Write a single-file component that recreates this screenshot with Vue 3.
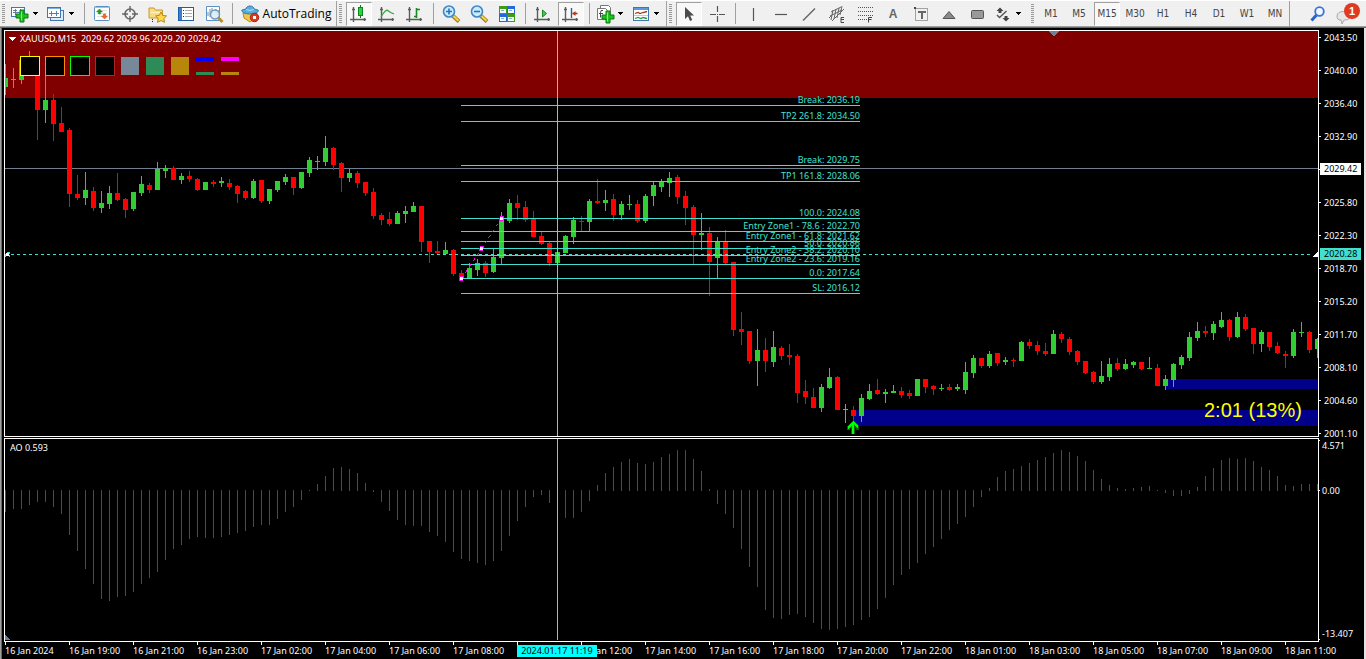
<script setup>
const arrow = '<path d="M0 0h5v1h-1v1h-1v1h-1v-1h-1v-1h-1z" fill="#000"/>'

const axes = '<path d="M4.5 3v15M1 15.5h16M3 5.5h3M15.500 14v3" stroke="#5c5c5c" stroke-width="1.4" fill="none"/>'
const plus = '<path d="M10 6h4v4h4v4h-4v4h-4v-4h-4v-4h4z" fill="#1fc01f" stroke="#0a7a12"/><path d="M11.500 7.500v9" stroke="#7cf07c"/>'
const lens = '<path d="M12 12l6 5.500" stroke="#a67c12" stroke-width="4"/><path d="M12.500 12l5 4.800" stroke="#f3d34b" stroke-width="2"/><circle cx="8" cy="7.500" r="5.500" fill="#c9ecfb" stroke="#3f86c6" stroke-width="1.600"/>'

const icons = {
  order: '<rect x="1.500" y="3.500" width="13" height="9" fill="#fff" stroke="#3d77b5"/><path d="M3 8.500h10M5.500 5v6M10.500 5v6M3 6.500h4" stroke="#5a7fa8"/>' + plus,
  profiles: '<rect x="4.500" y="6.500" width="13" height="10" fill="#dcecf9" stroke="#3d77b5"/><rect x="1.500" y="3.500" width="13" height="10" fill="#fff" stroke="#3d77b5"/><path d="M2 4.500h12" stroke="#7db1e2"/><path d="M3 9.500h10M5.500 7v5M10.500 7v5" stroke="#5a7fa8"/>',
  market: '<rect x="2.500" y="2.500" width="15" height="14" rx="1" fill="#fff" stroke="#5a8fc4"/><path d="M3 3.500h14" stroke="#9bc4e8"/><path d="M5 6.500h10M5 9.500h10M5 12.500h10" stroke="#e1e1e1"/><path d="M7.500 5l3 3h-2v2h-2v-2h-2z" fill="#20a020" stroke="#168016" stroke-width=".5"/><path d="M12.500 15l-3-3h2v-2h2v2h2z" fill="#f06a30" stroke="#c8481a" stroke-width=".5"/>',
  data: '<circle cx="10" cy="10" r="5" fill="none" stroke="#666" stroke-width="1.600"/><path d="M10 2v6M10 12v6M2 10h6M12 10h6" stroke="#666" stroke-width="1.400"/>',
  navigator: '<path d="M1 4h5l1.500 2h7v8h-13.500z" fill="#f8dc85" stroke="#c99a2b"/><path d="M2.500 8.500h11" stroke="#fff3c0"/><path d="M4.500 15v4" stroke="#222" stroke-dasharray="1 1"/><path d="M13 8l1.700 3.400 3.800.500-2.700 2.600.700 3.800-3.500-1.800-3.400 1.800.600-3.800-2.700-2.600 3.800-.500z" fill="#ffd94a" stroke="#b88714"/>',
  terminal: '<rect x="2.500" y="3.500" width="15" height="13" fill="#fff" stroke="#1e5da8"/><rect x="3" y="4" width="3" height="12" fill="#3c80cc"/><path d="M9 6.500h7M9 9.500h7M9 12.500h7" stroke="#aaa"/><path d="M7 6.500h1M7 9.500h1M7 12.500h1" stroke="#333"/>',
  tester: '<path d="M2.500 2.500h13v14h-13z" fill="#fff" stroke="#5d91c2"/><path d="M4 12V8M6 13V5M8 10V4M12 9V5M14 11V6" stroke="#6d8ca8"/><path d="M13.500 13l5 5" stroke="#bd8e1b" stroke-width="3"/><circle cx="11" cy="10.500" r="4.500" fill="#d3ecf7" fill-opacity=".85" stroke="#7296b6" stroke-width="1.400"/>',
  robot: '<path d="M2 9h14l-1 5-6 4-6-4z" fill="#f1c64b" stroke="#b98a1d"/><path d="M5 5c0-4 8-4 8 0l4 1c2 1-2 4-8 4S-.500 7 1 6z" fill="#58aee0" stroke="#2b78ad"/><path d="M5 5.500q4 2 8 0" fill="none" stroke="#b4e0f6"/><circle cx="13.500" cy="13.500" r="4.200" fill="#d93a20" stroke="#a82511"/><rect x="12" y="12" width="3" height="3" fill="#fff"/>',
  candles: axes + '<path d="M11.500 1v13" stroke="#0c7c18"/><rect x="9.500" y="3.500" width="4" height="8" fill="#31d043" stroke="#0c8a1c"/>',
  line: axes + '<path d="M4 13Q9 4 11.500 7Q13 8.500 17 10" fill="none" stroke="#3fa34a" stroke-width="1.300"/>',
  bars: axes + '<path d="M11.500 4v10M12 5.500h3M9 12.500h3" stroke="#178a20" stroke-width="1.600"/>',
  zoomIn: lens + '<path d="M8 4.500v6M5 7.500h6" stroke="#2375ba" stroke-width="1.600"/>',
  zoomOut: lens + '<path d="M5 7.500h6" stroke="#2375ba" stroke-width="1.600"/>',
  tile: '<rect x="2" y="2" width="8" height="8" fill="#3e9c1c"/><rect x="10" y="2" width="8" height="8" fill="#2767d8"/><rect x="2" y="10" width="8" height="8" fill="#2767d8"/><rect x="10" y="10" width="8" height="8" fill="#3e9c1c"/><path d="M3 5h6v4H3zM11 5h6v4h-6zM3 13h6v4H3zM11 13h6v4h-6z" fill="#f5faff"/><path d="M4 6.500h3M12 6.500h3M4 14.500h3M12 14.500h3" stroke="#86a9ce"/>',
  scroll: axes + '<path d="M9.500 6l4 3.500-4 3.500z" fill="#3fd04e" stroke="#178a20"/>',
  shift: axes + '<path d="M10.500 4v10" stroke="#24649e" stroke-width="1.400"/><path d="M11.500 9.500h5" stroke="#b33514" stroke-width="1.600"/><path d="M14.500 7v5l-3-2.500z" fill="#b33514"/>',
  indicators: '<path d="M5.500 1.500h8l2 2v10h-10z" fill="#fff" stroke="#777"/><path d="M2.500 4.500h8l2 2v9h-10z" fill="#fff" stroke="#777"/><path d="M8 6.500q-2.500-1-2.500 2v5M4 9.500h4" fill="none" stroke="#444"/><g transform="translate(1 1)">' + plus + '</g>',
  template: '<rect x="2.500" y="3.500" width="15" height="13" fill="#fff" stroke="#3d77b5"/><rect x="3" y="4" width="14" height="2" fill="#5b9ad8"/><path d="M4 9.500l3-1 2 1 3-1 4-1" fill="none" stroke="#9c3a1a" stroke-width="1.300"/><path d="M3 11.500h14" stroke="#b6cde4"/><path d="M4 14.500l3-1 3 1 2-1 4 1" fill="none" stroke="#2b9b3a" stroke-width="1.300"/>',
  cursor: '<path d="M6 3v12l3-2.800 2 4.800 2.200-1-2-4.500h3.800z" fill="#4a4a4a"/>',
  cross: '<path d="M10.500 2v6M10.500 12v6M3 10.500h6M12 10.500h6" stroke="#555" stroke-width="1.200"/><path d="M10 10h1v1h-1z" fill="#555"/>',
  vline: '<path d="M10.500 4v13" stroke="#555" stroke-width="1.200"/>',
  hline: '<path d="M4 10.500h12" stroke="#555" stroke-width="1.200"/>',
  trend: '<path d="M4 16.500L16 4.500" stroke="#666" stroke-width="1.400"/>',
  channel: '<path d="M2 14l4-4M5 17l12-12M4 8l10-5M6 6l-2 10M9 5l-2 10M12 4l-2 10M15 2l-2 9M3 12l12-6" stroke="#666" fill="none"/><path d="M17 13.500h-3v5h3M14 15.500h3" fill="none" stroke="#444"/>',
  fibo: '<path d="M3 3.500h15M3 7.500h15M3 11.500h15M3 15.500h9" stroke="#555" stroke-dasharray="1 1"/><path d="M17 13.500h-3.500v5M13.500 15.500h3" fill="none" stroke="#444"/>',
  label: '<rect x="4.500" y="4.500" width="12" height="12" fill="none" stroke="#555" stroke-dasharray="1 1"/><path d="M3 3h2v2H3z" fill="#444"/><path d="M7 8h8M11 8v7" stroke="#666" stroke-width="2"/>',
  triangle: '<path d="M4 14.500L10 7.500l6 7z" fill="#8a8a8a" stroke="#555"/>',
  rect: '<rect x="4.500" y="6.500" width="12" height="8" rx="1" fill="#999" stroke="#555"/>',
  arrows: '<path d="M7 3.500l3.500 3.500h-2v2h-3v-2h-2zM13 17.500l-3.500-3.500h2v-2h3v2h2z" fill="#444"/><path d="M4 11l2.500 2.500 7-6.500" stroke="#555" stroke-width="1.400" fill="none"/>',
  search: '<path d="M8.500 11l-5 5.500" stroke="#2a62cc" stroke-width="3"/><circle cx="11.500" cy="7.500" r="4.300" fill="#f0f8ff" stroke="#3a72d8" stroke-width="1.800"/>',
}

const standard = [
  { name: 'Market Watch', icon: 'market' },
  { name: 'Data Window', icon: 'data' },
  { name: 'Navigator', icon: 'navigator' },
  { name: 'Terminal', icon: 'terminal' },
  { name: 'Strategy Tester', icon: 'tester' },
]
const chartTypes = [
  { name: 'Candlesticks', icon: 'candles', on: true },
  { name: 'Line Chart', icon: 'line' },
  { name: 'Bar Chart', icon: 'bars' },
]
const zooms = [
  { name: 'Zoom In', icon: 'zoomIn' },
  { name: 'Zoom Out', icon: 'zoomOut' },
  { name: 'Tile Windows', icon: 'tile' },
]
const scrolling = [
  { name: 'Auto Scroll', icon: 'scroll' },
  { name: 'Chart Shift', icon: 'shift', on: true },
]
const pointers = [
  { name: 'Cursor', icon: 'cursor', on: true },
  { name: 'Crosshair', icon: 'cross' },
]
const drawing = [
  { name: 'Vertical Line', icon: 'vline' },
  { name: 'Horizontal Line', icon: 'hline' },
  { name: 'Trendline', icon: 'trend' },
  { name: 'Equidistant Channel', icon: 'channel' },
  { name: 'Fibonacci Retracement', icon: 'fibo' },
  { name: 'Text', text: 'A' },
  { name: 'Text Label', icon: 'label' },
  { name: 'Triangle', icon: 'triangle' },
  { name: 'Rectangle', icon: 'rect' },
]
const frames = ['M1', 'M5', 'M15', 'M30', 'H1', 'H4', 'D1', 'W1', 'MN']

const prices = ['2043.50', '2040.00', '2036.40', '2032.90', '', '2025.80', '2022.30', '2018.70', '2015.20', '2011.70', '2008.10', '2004.60', '2001.10']
const times = ['16 Jan 2024', '16 Jan 19:00', '16 Jan 21:00', '16 Jan 23:00', '17 Jan 02:00', '17 Jan 04:00', '17 Jan 06:00', '17 Jan 08:00', '', '17 Jan 12:00', '17 Jan 14:00', '17 Jan 16:00', '17 Jan 18:00', '17 Jan 20:00', '17 Jan 22:00', '18 Jan 01:00', '18 Jan 03:00', '18 Jan 05:00', '18 Jan 07:00', '18 Jan 09:00', '18 Jan 11:00']

const STEP = 8
const FIRST = 5

// high, body top, body bottom, low, direction
const candles = `64 78 87 95 g|68 79 80 88 g|60 60 80 84 g|51 58 64 70 g|60 62 110 140 r|60 100 110 123 g|94 100 124 141 r|107 123 132 132 r
128 130 194 207 r|175 194 198 200 r|172 190 198 205 g|187 191 208 211 r|191 203 208 213 g|186 193 204 209 g|173 193 200 201 r|198 199 210 218 r
192 192 209 211 g|176 184 193 196 g|183 185 190 193 r|162 169 190 190 g|165 168 171 178 g|166 168 180 180 r|173 176 180 184 g|171 176 179 182 r
178 179 190 191 r|182 182 190 190 g|180 182 184 187 r|177 181 183 187 g|179 183 187 190 r|185 186 194 203 r|190 191 198 200 r|179 181 198 199 g
180 180 201 203 r|189 189 201 204 g|181 181 190 192 g|174 177 182 185 g|177 177 188 195 r|172 172 188 189 g|157 160 173 177 g|156 161 162 170 g
136 148 162 166 g|147 148 165 170 r|162 163 178 192 r|169 173 178 182 g|171 173 183 188 r|182 182 193 196 r|188 192 216 219 r|213 215 220 225 r
212 219 224 226 r|211 213 224 224 g|206 211 214 223 g|202 206 212 212 g|206 206 242 252 r|241 241 252 263 r|241 251 253 255 r|242 250 254 254 g
249 250 274 276 r|270 273 278 278 r|263 268 278 278 g|259 263 270 276 g|261 263 273 277 r|248 257 272 273 g|212 218 258 264 g|199 203 221 223 g
195 203 208 220 r|201 207 220 222 r|211 219 237 237 r|232 236 244 245 r|242 243 263 266 r|252 252 263 263 g|235 236 253 253 g|217 220 237 244 g
216 221 222 231 r|199 201 222 231 g|179 201 203 204 r|190 200 203 211 g|194 199 215 221 r|201 204 215 220 g|195 204 205 210 g|200 204 221 223 r
194 196 221 223 g|182 185 196 206 g|179 182 187 192 g|172 178 183 197 g|175 177 197 204 r|191 196 208 225 r|205 207 235 265 r|213 233 235 250 g
227 233 262 296 r|237 242 258 278 g|230 242 263 264 r|262 262 330 336 r|312 329 332 345 r|331 331 361 364 r|329 350 361 386 g|338 350 361 372 r
331 347 362 367 g|346 348 356 360 r|344 355 357 365 r|354 356 393 403 r|380 391 397 404 r|388 397 408 408 r|384 387 408 412 g|368 377 388 389 g
376 377 410 410 r|404 409 410 423 l|406 410 416 420 r|394 398 416 422 g|384 391 399 400 g|379 390 394 395 r|389 392 394 403 g|385 391 393 393 g
387 391 395 398 r|390 393 396 399 r|379 379 396 396 g|379 379 387 393 r|385 386 389 395 r|384 388 389 391 g|384 387 390 391 r|384 387 389 391 g
362 372 390 394 g|355 358 373 378 g|358 358 366 368 r|351 354 366 368 g|353 353 363 366 r|357 360 362 365 g|358 360 361 367 r|341 342 361 361 g
339 342 346 349 r|341 345 351 355 r|343 351 354 356 r|330 334 354 354 g|332 334 339 343 r|337 339 352 355 r|350 351 362 365 r|361 361 373 374 r
371 372 382 384 r|361 376 382 384 g|358 364 377 381 g|358 363 369 371 r|359 364 369 370 g|361 362 365 368 g|362 362 369 370 r|357 368 369 369 g
364 368 386 386 r|375 379 386 390 g|363 364 380 387 g|355 357 365 369 g|332 337 358 361 g|322 331 338 341 g|326 331 333 337 r|321 324 333 340 g
312 320 327 328 g|319 320 337 341 r|312 317 337 338 g|314 317 329 331 r|328 328 344 354 r|330 332 344 352 g|332 332 347 351 r|342 346 353 354 r
351 354 356 368 r|329 332 356 358 g|322 332 333 337 g|331 332 350 353 r|338 339 349 358 g`
  .split(/[|\n]/)
  .map((row, i) => {
    const [high, top, bottom, low, dir] = row.trim().split(' ')
    return { x: FIRST + i * STEP, high: +high, top: +top, bottom: +bottom, low: +low, dir }
  })

// far end of each oscillator bar and its direction
const ZERO = 490
const oscillator = `512g 509g 509g 505g 502g 502g 507r 514r 535r 551r 569r 584r 599r 601r 597g 596g 592g 584g 578g 572g 560g 549g 545g 539g 537g 538r 538g 537g 535g 533g
531g 527g 525g 525g 519g 512g 507g 500g 490g 484g 476g 468g 467g 469r 473r 483r 492r 502r 511r 520r 525r 526r 526r 532r 536r 542r 552r 559r 561r 563r 565r
561g 551g 536g 521g 507g 497g 495g 503r 512r 518r 518g 512g 501g 485g 473g 467g 462g 459g 463r 464r 462g 457g 454g 450g 450g 459r 471r 489r 504r 514r 528r
549r 567r 587r 610r 618r 619r 615g 614g 617r 623r 629r 630r 629g 627g 625g 620g 617g 609g 598g 585g 575g 569g 563g 554g 547g 539g 530g 524g 517g 507g 497g
488g 477g 471g 469g 466g 463g 460g 457g 453g 450g 452r 456r 461r 470r 479r 485r 488r 489r 488g 487g 486g 490r 493r 496r 496r 494g 487g 476g 468g 460g 458g
459r 458g 461r 467r 470r 476r 485r 486r 484g 484r 484r`
  .split(/\s+/)
  .map((v, i) => {
    const end = parseInt(v, 10)
    const y = Math.min(end, ZERO)
    return { x: FIRST + i * STEP, y, h: end > ZERO ? end - ZERO : ZERO + 1 - end, dir: v.slice(-1) }
  })

const levels = [
  { y: 105, text: 'Break: 2036.19' },
  { y: 121, text: 'TP2 261.8: 2034.50' },
  { y: 165, text: 'Break: 2029.75' },
  { y: 181, text: 'TP1 161.8: 2028.06' },
  { y: 218, text: '100.0: 2024.08' },
  { y: 231, text: 'Entry Zone1 - 78.6 : 2022.70' },
  { y: 241, text: 'Entry Zone1 - 61.8: 2021.62' },
  { y: 248, text: '50.0: 2020.86' },
  { y: 255, text: 'Entry Zone2 - 38.2: 2020.10' },
  { y: 264, text: 'Entry Zone2 - 23.6: 2019.16' },
  { y: 278, text: '0.0: 2017.64' },
  { y: 293, text: 'SL: 2016.12' },
]
const handles = [
  { x: 461, y: 278 },
  { x: 481, y: 248 },
  { x: 501, y: 218 },
]
const swatches = ['yellow', 'orange', 'lime', 'brown', 'slate', 'sea', 'gold', 'pair-blue', 'pair-magenta']
</script>

<template>
  <div class="terminal">
    <header class="toolbar">
      <div class="group">
        <i class="grip"></i>
        <button class="tool drop" aria-label="New Order">
          <svg width="20" height="20" v-html="icons.order"></svg>
          <svg width="5" height="3" v-html="arrow"></svg>
        </button>
        <button class="tool drop" aria-label="Profiles">
          <svg width="20" height="20" v-html="icons.profiles"></svg>
          <svg width="5" height="3" v-html="arrow"></svg>
        </button>
        <i class="sep"></i>
        <button v-for="b in standard" :key="b.name" class="tool" :aria-label="b.name">
          <svg width="20" height="20" v-html="icons[b.icon]"></svg>
        </button>
        <i class="sep"></i>
        <button class="tool auto">
          <svg width="20" height="20" v-html="icons.robot"></svg>
          <span>AutoTrading</span>
        </button>
      </div>
      <div class="group">
        <i class="grip"></i>
        <button v-for="b in chartTypes" :key="b.name" class="tool" :class="{ on: b.on }" :aria-label="b.name">
          <svg width="20" height="20" v-html="icons[b.icon]"></svg>
        </button>
        <i class="sep"></i>
        <button v-for="b in zooms" :key="b.name" class="tool" :aria-label="b.name">
          <svg width="20" height="20" v-html="icons[b.icon]"></svg>
        </button>
        <i class="sep"></i>
        <button v-for="b in scrolling" :key="b.name" class="tool" :class="{ on: b.on }" :aria-label="b.name">
          <svg width="20" height="20" v-html="icons[b.icon]"></svg>
        </button>
        <i class="sep"></i>
        <button class="tool drop" aria-label="Indicators">
          <svg width="20" height="20" v-html="icons.indicators"></svg>
          <svg width="5" height="3" v-html="arrow"></svg>
        </button>
        <button class="tool drop" aria-label="Templates">
          <svg width="20" height="20" v-html="icons.template"></svg>
          <svg width="5" height="3" v-html="arrow"></svg>
        </button>
      </div>
      <div class="group">
        <i class="grip"></i>
        <button v-for="b in pointers" :key="b.name" class="tool" :class="{ on: b.on }" :aria-label="b.name">
          <svg width="20" height="20" v-html="icons[b.icon]"></svg>
        </button>
        <i class="sep"></i>
        <button v-for="b in drawing" :key="b.name" class="tool" :aria-label="b.name">
          <span v-if="b.text" class="letter">{{ b.text }}</span>
          <svg v-else width="20" height="20" v-html="icons[b.icon]"></svg>
        </button>
        <button class="tool drop" aria-label="Arrows">
          <svg width="20" height="20" v-html="icons.arrows"></svg>
          <svg width="5" height="3" v-html="arrow"></svg>
        </button>
      </div>
      <div class="group">
        <i class="grip"></i>
        <button v-for="f in frames" :key="f" class="tool frame" :class="{ on: f === 'M15' }">{{ f }}</button>
      </div>
      <div class="group last">
        <button class="tool" aria-label="Search">
          <svg width="20" height="20" v-html="icons.search"></svg>
        </button>
        <button class="tool bell" aria-label="Notifications">
          <svg width="24" height="24">
            <path d="M3 14c0-6 12-6 13 0 0 4-4 4-6 4l-2 4-1-4c-3 0-4-1-4-4z" fill="#e6e6e6" stroke="#a9a9a9" />
          </svg>
          <span class="badge">1</span>
        </button>
      </div>
    </header>

    <main class="workspace">
      <section class="pane" aria-label="XAUUSD M15 chart">
        <svg class="plot main" shape-rendering="crispEdges">
          <rect width="100%" height="67" fill="#800000" />
          <g transform="translate(-5 -31)">
            <rect x="1166" y="379" width="100%" height="10" fill="#00008b" />
            <rect x="853" y="410" width="100%" height="16" fill="#00008b" />
            <rect x="5" y="168" width="100%" height="1" fill="#708090" />
            <g v-for="c in candles" :key="c.x" :class="c.dir">
              <rect :x="c.x" :y="c.high" width="1" :height="c.low - c.high" />
              <rect :x="c.x - 2" :y="c.top" width="5" :height="c.bottom - c.top" />
            </g>
            <g v-for="l in levels" :key="l.y" class="level">
              <rect x="461" :y="l.y" width="399" height="1" />
              <text x="860" :y="l.y - 2" text-anchor="end">{{ l.text }}</text>
            </g>
            <line x1="5" y1="254.5" x2="100%" y2="254.5" stroke="#40e0d0" stroke-dasharray="3 3" />
            <path d="M461.500 278.500L501.500 218.500" stroke="#f0f" stroke-dasharray="3 4" fill="none" />
            <g v-for="h in handles" :key="h.x">
              <path :d="`M${h.x - 2} ${h.y + 3}v-3h1v-2h4v2h-1v3z`" fill="#f0f" />
              <rect :x="h.x - 1" :y="h.y - 1" width="3" height="3" fill="#fff" />
            </g>
            <path d="M5 257v-3h2v-2h3v2h-1v3h1v-2M6 257z" fill="#40e0d0" />
            <rect x="6" y="253" width="3" height="3" fill="#fff" />
            <path d="M1313 257l4-5h1v5z" fill="#fff" />
            <path d="M853 420l6 6v4h-3v-2h-1v6h-4v-6h-1v2h-3v-4z" fill="#006400" />
            <path d="M853 421l5 5v3l-4-4v9h-2v-9l-4 4v-3z" fill="#0f0" />
            <rect x="557" y="31" width="1" height="405" fill="#0ff" />
            <path d="M1048 31h11l-5.500 5.500z" fill="#708090" />
            <path d="M8 37h8l-4 4z" fill="#fff" />
            <text x="20" y="42" class="title">XAUUSD,M15&#160; 2029.62 2029.96 2029.20 2029.42</text>
            <text x="1204" y="417" class="timer">2:01 (13%)</text>
          </g>
        </svg>
        <div class="swatches">
          <button v-for="s in swatches" :key="s" class="swatch" :class="s" :aria-label="s"></button>
        </div>
      </section>
      <div class="axis">
        <ol class="prices">
          <li v-for="(p, i) in prices" :key="i">{{ p }}</li>
        </ol>
        <span class="tag last-price">2029.42</span>
        <span class="tag level-price">2020.28</span>
      </div>

      <section class="pane" aria-label="Awesome Oscillator">
        <svg class="plot sub" shape-rendering="crispEdges">
          <g transform="translate(-5 -439)">
            <rect v-for="b in oscillator" :key="b.x" :x="b.x" :y="b.y" width="1" :height="b.h" :class="'o' + b.dir" />
            <rect x="557" y="439" width="1" height="201" fill="#0ff" />
            <path d="M5 635l5 5H5z" fill="#708090" />
            <text x="10" y="451" class="title">AO 0.593</text>
          </g>
        </svg>
      </section>
      <ol class="values">
        <li class="max">4.571</li>
        <li class="zero">0.00</li>
        <li class="min">-13.407</li>
      </ol>

      <div class="times">
        <ol>
          <li v-for="(t, i) in times" :key="i">{{ t }}</li>
        </ol>
        <span class="tag time-tag">2024.01.17 11:19</span>
      </div>
    </main>
  </div>
</template>

<style>
body {
  background: #000;
}
</style>

<style scoped>
.terminal {
  min-height: 100vh;
  display: flex;
  flex-direction: column;
  font: 9px/12px "Noto Sans", "DejaVu Sans", sans-serif;
  color: #fff;
  overflow: hidden;
}
ol {
  list-style: none;
  margin: 0;
  padding: 0;
}
button {
  font: inherit;
  border: 0;
  padding: 0;
  margin: 0;
  background: none;
  color: inherit;
}

.toolbar {
  display: flex;
  box-sizing: border-box;
  height: 28px;
  background: #f0f0f0;
  border-top: 1px solid #fff;
  border-bottom: 1px solid #696969;
  box-shadow: inset 0 -1px #a0a0a0;
  color: #444;
}
.group {
  display: flex;
  align-items: center;
  height: 25px;
  border-right: 1px solid #a0a0a0;
  flex: none;
}
.group:nth-child(2) {
  padding-right: 1px;
}
.group:nth-child(3) {
  border-right-color: #f0f0f0;
  padding-right: 1px;
}
.group.last {
  margin-left: auto;
  border: 0;
  padding-right: 6px;
}
.grip {
  width: 3px;
  height: 19px;
  margin: 0 3px 0 2px;
  background: repeating-linear-gradient(#999 0 1px, #f0f0f0 1px 2px);
}
.sep {
  width: 1px;
  height: 21px;
  margin: 0 3px 0 4px;
  background: #a0a0a0;
}
.tool {
  width: 28px;
  height: 24px;
  display: flex;
  align-items: center;
  justify-content: center;
  flex: none;
}
.tool.drop {
  width: 36px;
  gap: 3px;
  justify-content: flex-start;
  padding-left: 2px;
}
.tool.auto {
  width: 100px;
  gap: 2px;
  color: #000;
  font: 12px/16px "Open Sans", sans-serif;
}
.tool.on {
  width: 26px;
  margin: 0 1px;
  box-sizing: border-box;
  background: #f8f8f8;
  border: 1px solid #fff;
  border-top-color: #a0a0a0;
  border-left-color: #a0a0a0;
}
.letter {
  font: bold 12px/16px "Liberation Sans", sans-serif;
  color: #666;
}
.frame {
  font: 10px/12px "DejaVu Sans Condensed", "DejaVu Sans", sans-serif;
}
.bell {
  position: relative;
}
.badge {
  position: absolute;
  right: 0;
  top: 1px;
  width: 16px;
  height: 16px;
  border-radius: 8px;
  background: #e03a20;
  color: #fff;
  font: bold 11px/16px "Liberation Sans", sans-serif;
  text-align: center;
}

.workspace {
  flex: 1;
  display: grid;
  grid-template-columns: minmax(0, 1fr) 45px;
  grid-template-rows: auto auto 1fr;
  row-gap: 1px;
  padding: 2px 0 0 3px;
  background: #000;
  border-left: 1px solid #a0a0a0;
  border-right: 2px solid #e3e3e3;
  box-shadow: inset 1px 0 #696969;
}
.pane {
  position: relative;
  border: 1px solid #fff;
}
.plot {
  display: block;
  width: 100%;
  overflow: hidden;
}
.plot.main {
  height: 405px;
}
.plot.sub {
  height: 201px;
}
.g {
  fill: #32cd32;
}
.r {
  fill: #f00;
}
.l {
  fill: #0f0;
}
.og {
  fill: #008000;
}
.or {
  fill: #f00;
}
.level {
  fill: #40e0d0;
}
.title {
  fill: #fff;
}
.timer {
  fill: #ff0;
  font: 20px "Liberation Sans", Arial, sans-serif;
}
.swatches {
  position: absolute;
  left: 15px;
  top: 25px;
  display: flex;
  gap: 5px;
}
.swatch {
  width: 20px;
  height: 20px;
  box-sizing: border-box;
  border: 1px solid transparent;
  background: #000;
  background-clip: padding-box;
}
.yellow {
  border-color: #ff0;
}
.orange {
  border-color: #ff8c00;
}
.lime {
  border-color: #0f0;
}
.brown {
  border-color: #a52a2a;
}
.slate {
  background-color: #778899;
}
.sea {
  background-color: #2e8b57;
}
.gold {
  background-color: #b8860b;
}
.pair-blue {
  background: linear-gradient(#00f 0 4px, transparent 4px 15px, #2e8b57 15px) padding-box;
}
.pair-magenta {
  background: linear-gradient(#f0f 0 4px, transparent 4px 15px, #b8860b 15px) padding-box;
}

.axis {
  position: relative;
}
.prices {
  margin-bottom: -8px;
}
.prices li {
  height: 33px;
  line-height: 16px;
  display: flex;
}
.prices li:last-child {
  height: 16px;
}
.prices li::before,
.values li::before {
  content: "";
  flex: none;
  width: 2px;
  height: 1px;
  margin-right: 3px;
  background: #fff;
}
.prices li::before {
  margin-top: 7px;
}
.values {
  line-height: 16px;
}
.values li {
  display: flex;
}
.values li::before {
  width: 1px;
  margin-right: 2px;
  margin-top: 2px;
}
.values .max {
  height: 45px;
}
.values .zero {
  height: 143px;
}
.values .zero::before {
  margin-top: 7px;
}
.values .min::before {
  margin-top: 13px;
}
.tag {
  position: absolute;
  box-sizing: border-box;
  color: #000;
  line-height: 12px;
}
.last-price,
.level-price {
  left: 1px;
  right: 3px;
  padding-left: 4px;
}
.last-price {
  top: 133px;
  background: #fff;
}
.level-price {
  top: 218px;
  background: #40e0d0;
}
.times {
  grid-column: 1 / -1;
  position: relative;
  margin-top: -1px;
  padding-left: 1px;
}
.times ol {
  display: flex;
}
.times li {
  flex: none;
  width: 64px;
  white-space: nowrap;
}
.times li::before {
  content: "";
  display: block;
  width: 1px;
  height: 3px;
  background: #fff;
}
.time-tag {
  left: 513px;
  top: 3px;
  width: 80px;
  text-align: center;
  background: #0ff;
}
</style>
